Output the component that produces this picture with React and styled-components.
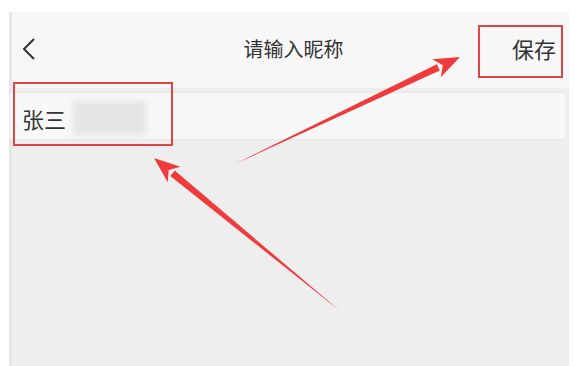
import React from "react";
import styled, { createGlobalStyle } from "styled-components";

const GlobalStyle = createGlobalStyle`
  html, body {
    margin: 0;
    padding: 0;
    background: #ffffff;
  }
  body {
    font-family: "Noto Sans CJK SC", "Noto Sans", sans-serif;
  }
`;

const Page = styled.div`
  position: relative;
  width: 574px;
  height: 366px;
  padding: 12px 5px 0 9px;
  box-sizing: border-box;
  overflow: hidden;
`;

const Screen = styled.div`
  height: 100%;
  display: flex;
  flex-direction: column;
  background: #eeeeee;
  border-left: 3px solid #e6e6e6;
`;

const Header = styled.div`
  height: 76px;
  display: grid;
  grid-template-columns: 80px 1fr 80px;
  align-items: center;
  background: #f7f7f7;
  padding-bottom: 4px;
  box-sizing: border-box;
`;

const Back = styled.div`
  display: flex;
  align-items: center;
  padding-left: 9px;
  padding-top: 2px;
`;

const Title = styled.div`
  text-align: center;
  font-size: 20px;
  color: #333333;
  padding-left: 6px;
`;

const Save = styled.div`
  justify-self: end;
  font-size: 22px;
  color: #333333;
  padding-right: 13px;
`;

const InputRow = styled.div`
  margin-top: 4px;
  height: 46px;
  display: flex;
  align-items: center;
  gap: 7px;
  background: #f8f8f8;
  border-top: 1px solid #e8e8e8;
  border-bottom: 1px solid #e8e8e8;
  padding-left: 12px;
  margin-right: 4px;
  margin-left: -2px;
`;

const Name = styled.span`
  font-size: 22px;
  color: #333333;
  padding-top: 4px;
`;

const Blur = styled.span`
  width: 73px;
  height: 34px;
  margin-top: 4px;
  background: #e4e4e4;
  filter: blur(3px);
`;

const Mark = styled.div`
  position: absolute;
  border: 2px solid #e04545;
  box-sizing: border-box;
`;

const Arrows = styled.svg`
  position: absolute;
  left: 0;
  top: 0;
  pointer-events: none;
`;

function Arrow({ x1, y1, x2, y2 }) {
  const dx = x2 - x1;
  const dy = y2 - y1;
  const len = Math.hypot(dx, dy);
  const ux = dx / len;
  const uy = dy / len;
  const px = -uy;
  const py = ux;
  const headLen = 24;
  const bx = x2 - ux * headLen;
  const by = y2 - uy * headLen;
  const shaft = `M${x1},${y1} L${bx + px * 3.5},${by + py * 3.5} L${bx - px * 3.5},${by - py * 3.5} Z`;
  const head = `M${x2},${y2} L${bx + px * 10 - ux * 2},${by + py * 10 - uy * 2} L${bx + ux * 5},${by + uy * 5} L${bx - px * 10 - ux * 2},${by - py * 10 - uy * 2} Z`;
  return (
    <g fill="#ef3b3b">
      <path d={shaft} />
      <path d={head} />
    </g>
  );
}

export default function App() {
  return (
    <>
      <GlobalStyle />
      <Page>
        <Screen>
          <Header>
            <Back>
              <svg width="16" height="24" viewBox="0 0 16 24">
                <path d="M13 2 L3 12 L13 22" fill="none" stroke="#333" strokeWidth="2" />
              </svg>
            </Back>
            <Title>请输入昵称</Title>
            <Save>保存</Save>
          </Header>
          <InputRow>
            <Name>张三</Name>
            <Blur />
          </InputRow>
        </Screen>
        <Mark style={{ left: 478, top: 25, width: 85, height: 53 }} />
        <Mark style={{ left: 13, top: 82, width: 160, height: 64 }} />
        <Arrows width="574" height="366">
          <Arrow x1={235} y1={164} x2={460} y2={57} />
          <Arrow x1={340} y1={311} x2={154} y2={158} />
        </Arrows>
      </Page>
    </>
  );
}
